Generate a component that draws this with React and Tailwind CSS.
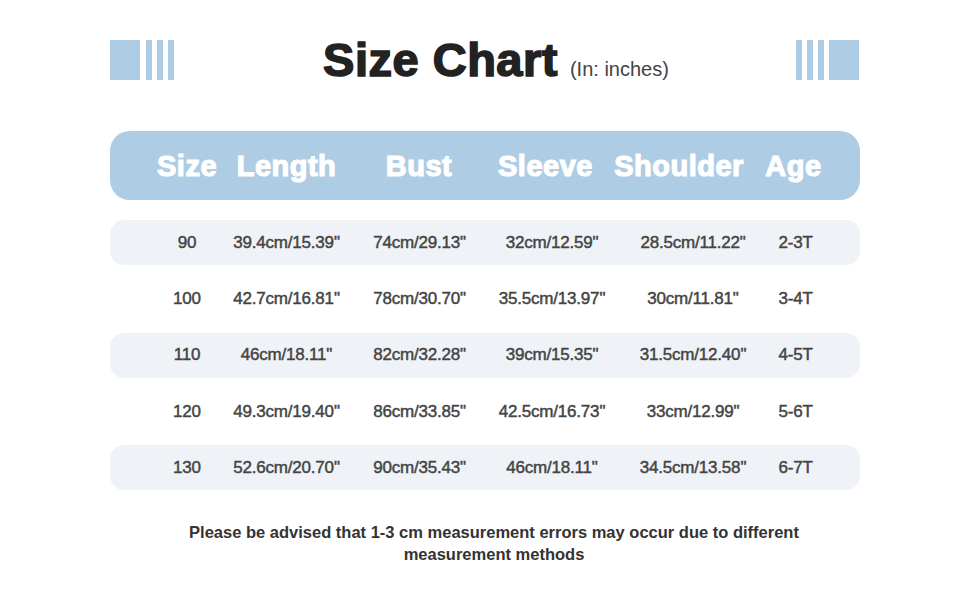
import React from 'react';

const rows = [
  ['90', '39.4cm/15.39"', '74cm/29.13"', '32cm/12.59"', '28.5cm/11.22"', '2-3T'],
  ['100', '42.7cm/16.81"', '78cm/30.70"', '35.5cm/13.97"', '30cm/11.81"', '3-4T'],
  ['110', '46cm/18.11"', '82cm/32.28"', '39cm/15.35"', '31.5cm/12.40"', '4-5T'],
  ['120', '49.3cm/19.40"', '86cm/33.85"', '42.5cm/16.73"', '33cm/12.99"', '5-6T'],
  ['130', '52.6cm/20.70"', '90cm/35.43"', '46cm/18.11"', '34.5cm/13.58"', '6-7T'],
];

const heads = ['Size', 'Length', 'Bust', 'Sleeve', 'Shoulder', 'Age'];

const Bars = ({ flip }) => (
  <div className={`flex h-[40px] gap-[5px] ${flip ? 'flex-row-reverse' : ''}`}>
    <div className="w-[30px] bg-[#aecce4] mr-[1px]" />
    <div className="w-[6px] bg-[#aecce4]" />
    <div className="w-[6px] bg-[#aecce4]" />
    <div className="w-[6px] bg-[#aecce4]" />
  </div>
);

const App = () => {
  return (
    <div className="w-[970px] h-[600px] bg-white flex flex-col items-center pt-[40px] font-['Liberation_Sans',Arial,sans-serif]">
      <div className="w-[750px] h-[48px] flex justify-between items-start">
        <Bars />
        <div className="flex-1 flex items-baseline justify-center pl-[22px] mt-[-8px]">
          <span className="text-[47px] leading-[56px] font-bold text-[#222] [-webkit-text-stroke:1.6px_#222] tracking-[0.5px]">
            Size Chart
          </span>
          <span className="ml-[12px] text-[20px] text-[#444]">(In: inches)</span>
        </div>
        <Bars flip />
      </div>

      {/* header */}
      <div className="mt-[43px] w-[750px] h-[69px] rounded-[20px] bg-[#aecce4] grid grid-cols-[60px_139px_126px_127px_140px_89px] pl-[47px] items-center">
        {heads.map((h) => (
          <div key={h} className="flex justify-center whitespace-nowrap text-white text-[29px] font-bold tracking-[0.5px] [-webkit-text-stroke:1.2px_#fff] mt-[3px]">
            {h}
          </div>
        ))}
      </div>

      {/* rows */}
      <div className="mt-[20px] w-[750px] flex flex-col gap-[11.25px]">
        {rows.map((r, i) => (
          <div
            key={r[0]}
            className={`h-[45px] rounded-[14px] grid grid-cols-[60px_139px_127px_138px_144px_61px] pl-[47px] items-center ${i % 2 === 0 ? 'bg-[#eff3f7]' : ''}`}
          >
            {r.map((c, j) => (
              <div key={j} className="flex justify-center whitespace-nowrap text-[17px] tracking-[-0.2px] text-[#444] [-webkit-text-stroke:0.45px_#444]">
                {c}
              </div>
            ))}
          </div>
        ))}
      </div>

      <p className="mt-[31px] w-[680px] pl-[18px] text-center text-[16.5px] leading-[22px] font-bold text-[#333]">
        Please be advised that 1-3 cm measurement errors may occur due to different measurement methods
      </p>
    </div>
  );
};

export default App;
